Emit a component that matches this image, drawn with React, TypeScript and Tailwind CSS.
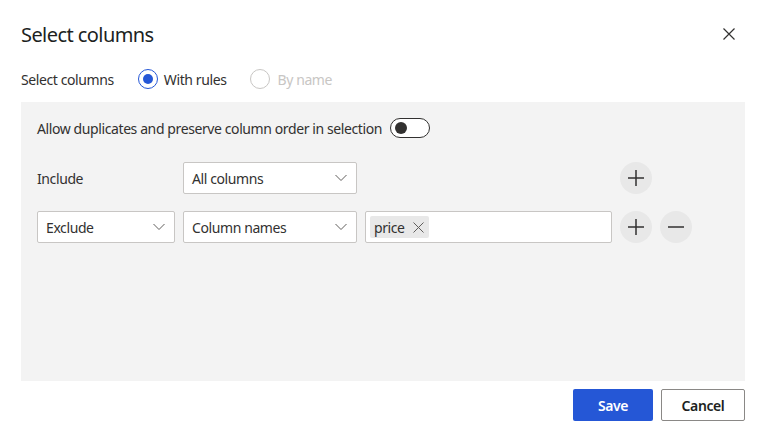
import React from "react";

const Chevron = () => (
  <svg width="12" height="8" viewBox="0 0 12 8" fill="none">
    <path d="M0.5 1 L6 6.5 L11.5 1" stroke="#605e5c" strokeWidth="1" />
  </svg>
);

const Dropdown = ({ label, w }: { label: string; w: string }) => (
  <div className={`${w} h-[32px] bg-white border border-[#c8c6c4] rounded-[2px] flex items-center justify-between pl-[8px] pr-[9px] text-[14px] text-[#323130]`}>
    <span>{label}</span>
    <Chevron />
  </div>
);

const Circle = ({ minus }: { minus?: boolean }) => (
  <div className="w-[32px] h-[32px] rounded-full bg-[#e8e8e8] flex items-center justify-center">
    <svg width="16" height="16" viewBox="0 0 16 16">
      <path d="M0 8 H16" stroke="#323130" strokeWidth="1.5" />
      {!minus && <path d="M8 0 V16" stroke="#323130" strokeWidth="1.5" />}
    </svg>
  </div>
);

export default function App() {
  return (
    <div
      className="w-[766px] h-[441px] bg-white flex flex-col text-[#201f1e] tracking-[-0.4px]"
      style={{ fontFamily: '"Noto Sans", "Open Sans", sans-serif' }}
    >
      <div className="flex items-center justify-between pl-[21px] pr-[31px] pt-[20px] h-[50px]">
        <div className="text-[20px] leading-[28px] tracking-[-0.57px]">Select columns</div>
        <svg width="12" height="12" viewBox="0 0 12 12" className="-mt-[2px]">
          <path d="M0.5 0.5 L11.5 11.5 M11.5 0.5 L0.5 11.5" stroke="#323130" strokeWidth="1.2" />
        </svg>
      </div>
      <div className="flex items-center pl-[21px] mt-[18px] h-[22px] text-[14px]">
        <span className="text-[#323130]">Select columns</span>
        <div className="ml-[24px] w-[20px] h-[20px] rounded-full border border-[#2557d6] flex items-center justify-center">
          <div className="w-[10px] h-[10px] rounded-full bg-[#2557d6]" />
        </div>
        <span className="ml-[6px] text-[#323130]">With rules</span>
        <div className="ml-[24px] w-[20px] h-[20px] rounded-full border border-[#c8c6c4]" />
        <span className="ml-[7px] text-[#c8c6c4]">By name</span>
      </div>
      <div className="mx-[21px] mt-[12px] h-[279px] bg-[#f3f3f3] px-[16px] pt-[16px] text-[14px] text-[#323130]">
        <div className="flex items-center h-[20px]">
          <span>Allow duplicates and preserve column order in selection</span>
          <div className="ml-[8px] w-[40px] h-[20px] rounded-full border border-[#323130] bg-white flex items-center pl-[4px]">
            <div className="w-[12px] h-[12px] rounded-full bg-[#323130]" />
          </div>
        </div>
        <div className="flex items-center gap-[8px] mt-[24px]">
          <div className="w-[138px]">Include</div>
          <Dropdown label="All columns" w="w-[174px]" />
          <div className="w-[247px]" />
          <Circle />
        </div>
        <div className="flex items-center gap-[8px] mt-[17px]">
          <Dropdown label="Exclude" w="w-[138px]" />
          <Dropdown label="Column names" w="w-[174px]" />
          <div className="w-[247px] h-[32px] bg-white border border-[#c8c6c4] rounded-[2px] flex items-center pl-[4px]">
            <div className="h-[22px] bg-[#e8e8e8] rounded-[2px] flex items-center pl-[4px] pr-[5px]">
              <span>price</span>
              <svg width="11" height="11" viewBox="0 0 11 11" className="ml-[8px]">
                <path d="M0.5 0.5 L10.5 10.5 M10.5 0.5 L0.5 10.5" stroke="#605e5c" strokeWidth="1" />
              </svg>
            </div>
          </div>
          <Circle />
          <Circle minus />
        </div>
      </div>
      <div className="flex justify-end gap-[8px] pr-[21px] mt-[8px]">
        <div className="w-[80px] h-[32px] rounded-[2px] bg-[#2557d6] text-white text-[14px] font-semibold flex items-center justify-center">
          Save
        </div>
        <div className="w-[84px] h-[32px] rounded-[2px] bg-white border border-[#8a8886] text-[#201f1e] text-[14px] font-semibold flex items-center justify-center">
          Cancel
        </div>
      </div>
    </div>
  );
}
